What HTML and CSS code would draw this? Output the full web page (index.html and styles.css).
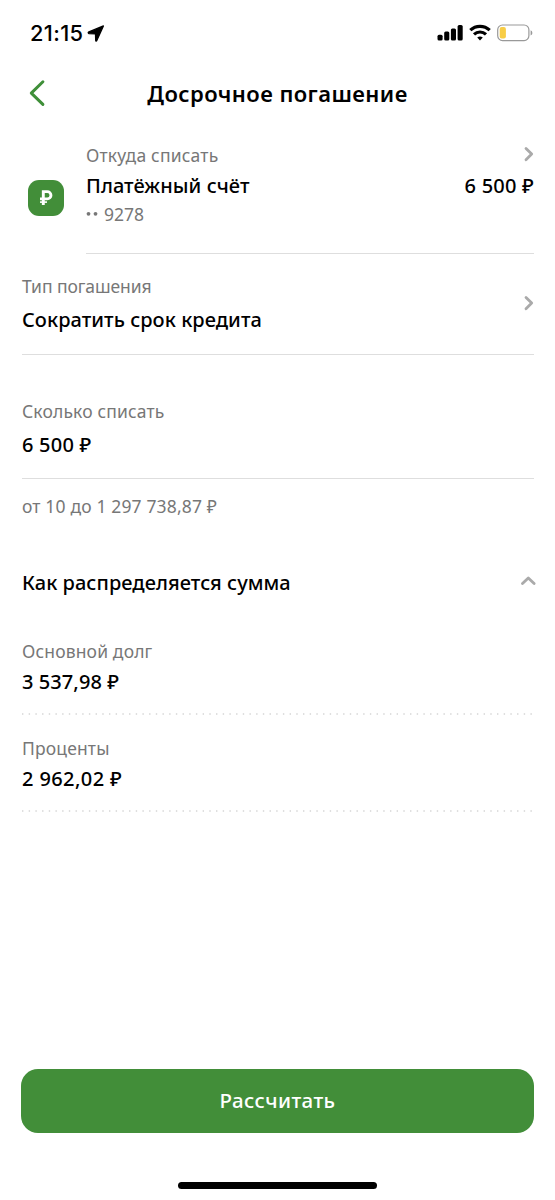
FILE: index.html
```html
<!DOCTYPE html>
<html lang="ru">
<head>
<meta charset="utf-8">
<meta name="viewport" content="width=device-width">
<title>Досрочное погашение</title>
<link rel="stylesheet" href="styles.css">
</head>
<body>
<div class="screen">
  <div class="status">
    <div class="status-left">
      <span class="time">21:15</span>
      <svg class="location" width="18" height="18" viewBox="0 0 18 18"><path d="M16.4 1.9 9.8 16.6Q9 17.8 8.7 16.3L8.5 9.9 2 9.6Q.4 8.9 1.9 7.9Z" fill="#000" stroke="#000" stroke-width="1.3" stroke-linejoin="round"/></svg>
    </div>
    <div class="status-right">
      <svg width="26" height="17" viewBox="0 0 26 17"><rect x=".5" y="10.7" width="5.1" height="5.7" rx="1.5"/><rect x="7.2" y="7.6" width="5.1" height="8.8" rx="1.5"/><rect x="13.9" y="4.5" width="5.1" height="11.9" rx="1.5"/><rect x="20.6" y="1" width="5.1" height="15.4" rx="1.5"/></svg>
      <svg width="22" height="17" viewBox="0 0 22 17" fill="none" stroke="#000" stroke-width="3.2"><path d="M1.3 6.2C6.8 1.1 15.2 1.1 20.7 6.2"/><path d="M5 10.4C8.5 7.2 13.5 7.2 17 10.4"/><path d="M11 16.5 8.2 13.6Q11 11.3 13.8 13.6Z" fill="#000" stroke="none"/></svg>
      <svg width="36" height="18" viewBox="0 0 36 18"><rect x=".7" y="1" width="31.2" height="15.6" rx="4.8" fill="#fff" stroke="#999" stroke-width="1.2"/><rect x="2.7" y="3" width="6.2" height="11.6" rx="2" fill="#f8cd46"/><path d="M33.6 6.2Q35.4 7 35.4 8.9T33.6 11.6Z" fill="#999"/></svg>
    </div>
  </div>

  <header class="header">
    <svg class="back" width="18" height="28" viewBox="0 0 18 28"><path d="M14.9 2.8 3.3 14.1 14.9 25.4" fill="none" stroke="#3f8f39" stroke-width="3" stroke-linecap="round" stroke-linejoin="round"/></svg>
    <h1 class="title">Досрочное погашение</h1>
  </header>

  <main class="content">
    <section class="account">
      <div class="account-icon"><svg width="36" height="36" viewBox="0 0 36 36" fill="none" stroke="#fff"><path d="M15.3 24.9V11.6H19.3A3.4 3.4 0 0 1 19.3 18.9H12" stroke-width="2.9"/><path d="M12 22.1H19" stroke-width="1.6"/></svg></div>
      <div class="account-body">
        <div class="row"><span class="label from">Откуда списать</span><svg class="chevron" width="10" height="16" viewBox="0 0 10 16"><path d="M2 2.4 7.7 8.1 2 13.7"/></svg></div>
        <div class="row account-main"><span class="value name">Платёжный счёт</span><span class="value sum">6 500 ₽</span></div>
        <div class="label number"><svg class="dots" width="12" height="6" viewBox="0 0 12 6"><circle cx="2.5" cy="2.8" r="1.9"/><circle cx="9.5" cy="2.8" r="1.9"/></svg><span>9278</span></div>
      </div>
    </section>

    <section class="field type">
      <div><div class="label type-label">Тип погашения</div><div class="value type-value">Сократить срок кредита</div></div>
      <svg class="chevron" width="10" height="16" viewBox="0 0 10 16"><path d="M2 2.4 7.7 8.1 2 13.7"/></svg>
    </section>

    <section class="field amount">
      <div><div class="label amount-label">Сколько списать</div><div class="value sum">6 500 ₽</div></div>
    </section>
    <div class="label hint">от 10 до 1 297 738,87 ₽</div>

    <div class="row breakdown">
      <h2 class="value breakdown-title">Как распределяется сумма</h2>
      <svg class="chevron up" width="17" height="10" viewBox="0 0 17 10"><path d="M2.5 7.6 8.3 1.9 14.1 7.6"/></svg>
    </div>

    <section class="detail">
      <div class="label debt">Основной долг</div>
      <div class="value sum principal">3 537,98 ₽</div>
      <svg class="dotted" width="512" height="2" viewBox="0 0 512 2"><path d="M0 1H512"/></svg>
    </section>
    <section class="detail">
      <div class="label percent">Проценты</div>
      <div class="value sum interest">2 962,02 ₽</div>
      <svg class="dotted" width="512" height="2" viewBox="0 0 512 2"><path d="M0 1H512"/></svg>
    </section>
  </main>

  <footer class="footer">
    <button class="submit">Рассчитать</button>
    <div class="home"></div>
  </footer>
</div>
</body>
</html>
```
FILE: styles.css
```css
* { box-sizing: border-box; }
body { margin: 0; background: #fff; }
svg { display: block; flex: none; }
.screen {
  display: flex;
  flex-direction: column;
  width: 555px;
  height: 1200px;
  color: #000;
  background: #fff;
  font-family: "Noto Sans", sans-serif;
  white-space: nowrap;
}
.status {
  display: flex;
  justify-content: space-between;
  height: 56px;
  padding: 24px 22px 0 30px;
}
.status-left { display: flex; gap: 4px; }
.time { font: 500 21.8px/19px Inter, sans-serif; letter-spacing: .35px; }
.status-right { display: flex; gap: 6px; }
.header {
  display: grid;
  grid-template-columns: 60px 1fr 60px;
  height: 74px;
  padding: 23px 0 0;
}
.back { margin-left: 28px; }
.title { margin: -1px 0 0; text-align: center; font-size: 22px; line-height: 30px; font-weight: 600; letter-spacing: .43px; }
.content { flex: 1; padding: 0 21px 0 22px; }
.row { display: flex; justify-content: space-between; }
.label { color: #777; font-size: 17.5px; line-height: 24px; letter-spacing: .15px; }
.value { margin: 0; font-size: 20px; line-height: 28px; font-weight: 460; letter-spacing: .05px; }
.sum { letter-spacing: .22px; }
.account { display: flex; height: 124px; }
.account-icon { width: 36px; height: 36px; margin: 50px 22px 0 6px; border-radius: 11px; background: #428e39; }
.account-body { flex: 1; padding-top: 13px; border-bottom: 1.5px solid #dedede; }
.from { letter-spacing: .2px; }
.account-main { margin-top: 5px; }
.number { display: flex; align-items: center; gap: 6px; margin-top: 2px; letter-spacing: 0; }
.dots { fill: #777; }
.chevron { margin-top: 3px; fill: none; stroke: #aaa; stroke-width: 2.8; stroke-linecap: round; stroke-linejoin: round; }
.field { display: flex; justify-content: space-between; border-bottom: 1.5px solid #dedede; }
.type { height: 101px; padding-top: 20px; }
.type-label { letter-spacing: -.08px; }
.type-value { margin-top: 8px; }
.type .chevron { margin-top: 21px; }
.amount { height: 124px; padding-top: 44px; }
.amount .sum { margin-top: 8px; }
.hint { margin-top: 15px; }
.breakdown { height: 70px; margin-top: 51px; }
.up { margin: 7px -3px 0 0; }
.detail { height: 97px; }
.detail .principal { margin-top: 5px; letter-spacing: .08px; }
.detail .interest { margin-top: 5px; letter-spacing: .4px; }
.dotted { margin-top: 17px; fill: none; stroke: #d5d5d5; stroke-width: 1.3; stroke-dasharray: 1.4 5.29; }
.footer { height: 131.5px; padding: 0 21px; }
.submit {
  display: block;
  width: 100%;
  height: 64.5px;
  padding: 0 0 2px;
  border: 0;
  border-radius: 17px;
  background: #428e39;
  color: #fff;
  font: 460 20.5px/28px "Noto Sans", sans-serif;
  letter-spacing: .4px;
}
.home { width: 199px; height: 7px; margin: 49px auto 0; border-radius: 4px; background: #000; }
```
